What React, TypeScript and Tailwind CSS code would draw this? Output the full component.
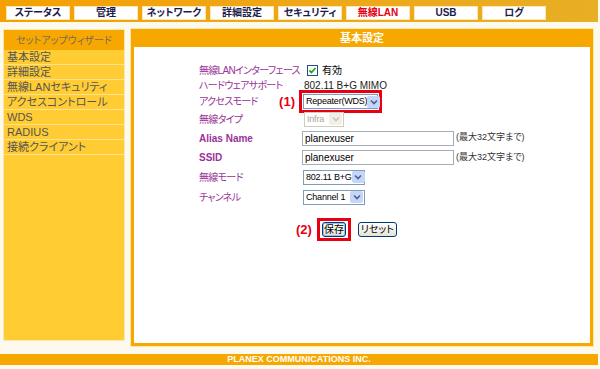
import React from "react";

const font = "font-['Liberation_Sans','Noto_Sans_CJK_JP',sans-serif] [font-feature-settings:'palt']";

const tabs = ["ステータス", "管理", "ネットワーク", "詳細設定", "セキュリティ", "無線LAN", "USB", "ログ"];

const menu = ["基本設定", "詳細設定", "無線LANセキュリティ", "アクセスコントロール", "WDS", "RADIUS", "接続クライアント"];

function Arrow({ disabled }: { disabled?: boolean }) {
  return (
    <div
      className={`mr-[1px] flex h-[12px] w-[13px] shrink-0 items-center justify-center rounded-[2px] ${
        disabled ? "bg-[#f0efe8]" : "bg-[#c6d6fb]"
      }`}
    >
      <svg width="8" height="6" viewBox="0 0 8 6">
        <path
          d="M1 1.5 L4 4.5 L7 1.5"
          fill="none"
          stroke={disabled ? "#c9c7ba" : "#4d6185"}
          strokeWidth="1.6"
        />
      </svg>
    </div>
  );
}

function Select({ value, className, disabled }: { value: string; className: string; disabled?: boolean }) {
  return (
    <div
      className={`flex h-[15px] items-center border bg-white ${
        disabled ? "border-[#cfcdc0] text-[#aca899]" : "border-[#7f9db9] text-black"
      } ${className}`}
    >
      <span className="flex-1 whitespace-nowrap pl-[2px] text-[9px] leading-none tracking-[-0.2px]">{value}</span>
      <Arrow disabled={disabled} />
    </div>
  );
}

function TextInput({ value }: { value: string }) {
  return (
    <div className="flex items-center">
      <div className="flex h-[15px] w-[152px] items-center border border-[#a5acb5] bg-white pl-[2px] text-[10px] text-black">
        {value}
      </div>
      <span className="ml-[2px] whitespace-nowrap text-[9px] text-[#333]">(最大32文字まで)</span>
    </div>
  );
}

function Row({ label, h, bold, mark, children }: { label: string; h: string; bold?: boolean; mark?: string; children: React.ReactNode }) {
  return (
    <div className={`flex items-center ${h}`}>
      <div className="flex w-[103px] shrink-0 items-center">
        <span
          className={`whitespace-nowrap text-[#993399] ${
            bold ? "text-[10px] font-bold" : "text-[10px] tracking-[-0.7px]"
          }`}
        >
          {label}
        </span>
        {mark && <span className="ml-auto mr-[7px] text-[13px] font-bold text-[#e60012]">{mark}</span>}
      </div>
      <div className="flex items-center">{children}</div>
    </div>
  );
}

export default function App() {
  return (
    <div className={`h-[369px] w-[600px] overflow-hidden bg-[#fcfaee] ${font}`}>
      <div className="flex h-[22px] w-[598px] gap-[4px] bg-gradient-to-r from-[#f5a000] to-[#e8ae24] pl-[6px] pt-[6px]">
        {tabs.map((t) => (
          <div
            key={t}
            className={`flex h-[14px] w-[64px] items-center justify-center border border-[#fde9b0] bg-white text-[10px] font-bold leading-none ${
              t === "無線LAN" ? "text-[#e60012]" : "text-[#1c1c4c]"
            }`}
          >
            {t}
          </div>
        ))}
      </div>

      <div className="mt-[7px] flex">
        <div className="ml-[3px] h-[312px] w-[122px] border border-[#fde8a8] bg-[#ffcc33]">
          <div className="flex h-[20px] items-center justify-center bg-[#f7a800] text-[10px] text-[#7a6a55]">
            セットアップウィザード
          </div>
          {menu.map((m) => (
            <div key={m} className="flex h-[15px] items-center border-b border-[#ffe28f] pl-[3px] text-[11px] text-[#555]">
              {m}
            </div>
          ))}
        </div>

        <div className="ml-[6px] flex h-[317px] w-[462px] flex-col border-[3px] border-t-0 border-[#f7a800] shadow-[0_0_0_1px_#fde8a8]">
          <div className="flex h-[18px] items-center justify-center bg-[#f7a800] text-[11px] font-bold text-white">
            基本設定
          </div>
          <div className="flex-1 bg-white pl-[65px] pt-[16px]">
            <Row label="無線LANインターフェース" h="h-[15px]">
              <div className="ml-[5px] flex h-[11px] w-[11px] items-center justify-center border border-[#1c5180] bg-white">
                <svg width="9" height="9" viewBox="0 0 9 9">
                  <path d="M1.5 4.5 L3.5 6.5 L7.5 2" fill="none" stroke="#21a121" strokeWidth="1.8" />
                </svg>
              </div>
              <span className="ml-[4px] text-[10px] text-black">有効</span>
            </Row>
            <Row label="ハードウェアサポート" h="h-[15px]">
              <span className="ml-[2px] whitespace-nowrap text-[10px] text-[#222]">802.11 B+G MIMO</span>
            </Row>
            <Row label="アクセスモード" h="h-[17px]" mark="(1)">
              <div className="-ml-[3px] border-[3px] border-[#e60012] px-[1px] py-[1px]">
                <Select value="Repeater(WDS)" className="w-[75px]" />
              </div>
            </Row>
            <Row label="無線タイプ" h="h-[18px]">
              <Select value="Infra" className="ml-[2px] w-[40px]" disabled />
            </Row>
            <Row label="Alias Name" h="h-[20px]" bold>
              <TextInput value="planexuser" />
            </Row>
            <Row label="SSID" h="h-[19px]" bold>
              <TextInput value="planexuser" />
            </Row>
            <Row label="無線モード" h="h-[20px]">
              <Select value="802.11 B+G" className="ml-[1px] w-[62px]" />
            </Row>
            <Row label="チャンネル" h="h-[20px]">
              <Select value="Channel 1" className="ml-[1px] w-[62px]" />
            </Row>

            <div className="mt-[11px] flex items-center pl-[97px]">
              <span className="text-[13px] font-bold text-[#e60012]">(2)</span>
              <div className="ml-[5px] border-[3px] border-[#e60012] px-[2px] py-[1px]">
                <div className="flex h-[15px] w-[24px] items-center justify-center rounded-[3px] border border-[#003c74] bg-gradient-to-b from-white to-[#e6e3d6] text-[10px] text-black shadow-[inset_0_0_0_1px_#9fbdf0]">
                  保存
                </div>
              </div>
              <div className="ml-[7px] flex h-[15px] w-[39px] items-center justify-center rounded-[3px] border border-[#003c74] bg-gradient-to-b from-white to-[#e6e3d6] text-[10px] text-black">
                リセット
              </div>
            </div>
          </div>
        </div>
      </div>

      <div className="mt-[8px] flex h-[11px] w-[598px] items-center justify-center bg-[#f7a800] text-[9px] font-bold leading-none text-white">
        PLANEX COMMUNICATIONS INC.
      </div>
    </div>
  );
}
